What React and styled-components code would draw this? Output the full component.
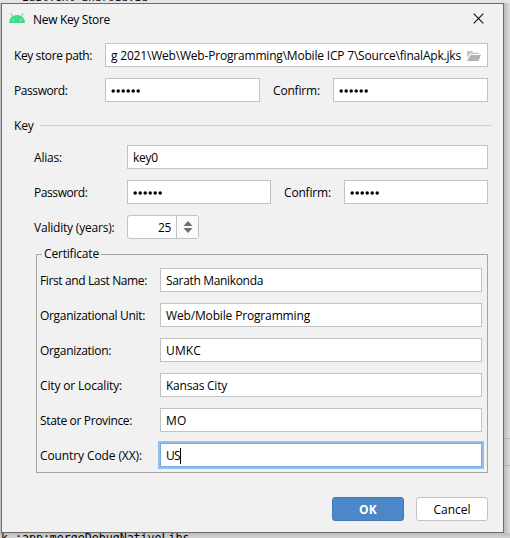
import React, { useLayoutEffect, useRef, useState } from "react";
import styled, { createGlobalStyle } from "styled-components";

const GlobalStyle = createGlobalStyle`
  * { box-sizing: border-box; }
  body { margin: 0; overflow: hidden; }
`;

const Desktop = styled.main`
  width: 510px;
  height: 538px;
  display: grid;
  grid-template-columns: 1px 503px 6px;
  grid-template-rows: 3px 530px 5px;
  overflow: hidden;
  background: #dcdcdc;
  font: 12px/16px "Open Sans", "Noto Sans", sans-serif;
  color: #000;
`;

const CodeStrip = styled.div`
  grid-column: 1 / -1;
  display: flex;
  align-items: ${(p) => (p.$bottom ? "flex-start" : "flex-end")};
  overflow: hidden;
  background: ${(p) => (p.$bottom ? "linear-gradient(#bdbdbd, #d2d2d2)" : "#e3e3e3")};
  padding-left: ${(p) => (p.$bottom ? 1 : 22)}px;
  font: ${(p) => (p.$bottom ? 11.6 : 11)}px/14px "DejaVu Sans Mono", monospace;
  white-space: pre;
`;

const CodeText = styled.span`
  margin: ${(p) => p.$margin};
`;

const LeftEdge = styled.div`
  background: #c3c3c3;
`;

const RightEdge = styled.div`
  display: grid;
  grid-template-rows: 435px 28px 1fr;
  background: linear-gradient(90deg, #b9b9b9, #dedede);
`;

const PaneBar = styled.div`
  grid-row: 2;
  border-top: 1px solid #b3b3b3;
  border-bottom: 1px solid #b3b3b3;
`;

const Dialog = styled.section`
  display: flex;
  flex-direction: column;
  background: #f1f1f1;
  border: 1px solid #6c6c6c;
`;

const TitleBar = styled.header`
  height: 39px;
  display: flex;
  align-items: flex-start;
  padding: 6px 17px 0 6px;
`;

const Title = styled.h1`
  margin: 0 auto 0 7px;
  padding-top: 2px;
  font: inherit;
`;

const Row = styled.div`
  height: 24px;
  flex: none;
  display: flex;
  align-items: center;
  padding: 0 ${(p) => (p.$inset ? 0 : 15)}px 0 ${(p) => p.$left}px;
  margin-bottom: 11px;
`;

const Label = styled.label`
  width: ${(p) => p.$w}px;
  flex: none;
  padding: 2px 0 0 ${(p) => p.$indent ?? 0}px;
  white-space: nowrap;
`;

const Field = styled.div`
  height: 24px;
  width: ${(p) => (p.$w ? `${p.$w}px` : "auto")};
  flex: ${(p) => (p.$w ? "none" : "1")};
  min-width: 0;
  display: flex;
  align-items: center;
  padding: 2px 5px 0;
  background: #fff;
  border: 1px solid ${(p) => (p.$focused ? "#76a9dc" : "#c2c2c2")};
  box-shadow: ${(p) => (p.$focused ? "0 0 0 2px #97c0e8" : "none")};
  white-space: nowrap;
`;

const Caret = styled.i`
  width: 1px;
  height: 16px;
  margin-bottom: 1px;
  background: #000;
`;

const DotsSvg = styled.svg`
  display: block;
  flex: none;
`;

const PathIcon = styled.svg`
  margin: 0 0 1px auto;
  flex: none;
`;

const SectionHeading = styled.h2`
  height: 24px;
  margin: 0 0 8px;
  padding: 1px 11px 0 12px;
  display: flex;
  align-items: center;
  font: inherit;
`;

const Rule = styled.span`
  flex: 1;
  height: 1px;
  margin: 0 0 1px 6px;
  background: #cfcfcf;
`;

const Spinner = styled.div`
  width: 72px;
  height: 24px;
  display: grid;
  grid-template-columns: 49px 1fr;
  background: #fff;
  border: 1px solid #c2c2c2;
  border-radius: 3px;
  overflow: hidden;
`;

const SpinnerValue = styled.span`
  padding: 4px 5px 0 0;
  text-align: right;
  border-right: 1px solid #c2c2c2;
`;

const SpinnerArrows = styled.span`
  display: grid;
  place-items: center;
  background: #fafafa;
`;

const Certificate = styled.fieldset`
  height: 227px;
  flex: none;
  margin: -4px 15px 24px 34px;
  padding: 6px 5px 0 3px;
  min-width: 0;
  border: 1px solid #a6a6a6;
`;

const Legend = styled.legend`
  height: 16px;
  margin-left: 2px;
  padding: 0 2px;
`;

const Footer = styled.footer`
  display: flex;
  justify-content: flex-end;
  gap: 12px;
  padding-right: 15px;
`;

const Button = styled.button`
  width: 72px;
  height: 24px;
  padding: 1px 0 0;
  border-radius: 3px;
  border: 1px solid ${(p) => (p.$primary ? "#4579b4" : "#c2c2c2")};
  background: ${(p) => (p.$primary ? "#4c87c8" : "#fff")};
  color: ${(p) => (p.$primary ? "#fff" : "#000")};
  font: inherit;
  font-weight: ${(p) => (p.$primary ? 700 : 400)};
`;

const CloseButton = styled.span`
  height: 11px;
  display: flex;
  margin: 3px 2px 0 0;
`;

const TextRun = styled.span`
  display: inline-block;
  white-space: pre;
`;

/* Tracks its letters so that the run takes up the given width. */
function Fit({ width, children }) {
  const ref = useRef(null);
  const [spacing, setSpacing] = useState(0);
  useLayoutEffect(() => {
    const natural = ref.current.getBoundingClientRect().width;
    setSpacing((width - natural) / children.length);
  }, []);
  return (
    <TextRun ref={ref} style={{ letterSpacing: spacing }}>
      {children}
    </TextRun>
  );
}

const AndroidIcon = () => (
  <svg width="18" height="14" viewBox="0 0 18 14">
    <path d="M1 13a8 8 0 0 1 16 0Z" fill="#45dc88" />
    <path d="M4.7 6.8 2.8 3.2M13.3 6.8l1.9-3.6" stroke="#45dc88" strokeWidth="1" />
    <circle cx="5.3" cy="10" r=".75" fill="#f1f1f1" />
    <circle cx="12.7" cy="10" r=".75" fill="#f1f1f1" />
  </svg>
);

const CloseIcon = () => (
  <svg width="11" height="11" viewBox="0 0 11 11">
    <path d="m.7.7 9.6 9.6M10.3.7.7 10.3" stroke="#111" strokeWidth="1.15" />
  </svg>
);

const FolderIcon = () => (
  <PathIcon width="16" height="14" viewBox="0 0 16 14">
    <path d="M1 9V2h5l1.5 1.8H13V5H4Z" fill="#c2c5c8" />
    <path d="M4.5 6H15l-2.6 6H1Z" fill="#aeb3b7" />
  </PathIcon>
);

const Dots = () => (
  <DotsSvg width="30" height="6" viewBox="0 0 30 6">
    {[0, 1, 2, 3, 4, 5].map((i) => (
      <circle key={i} cx={2.2 + i * 5} cy="3" r="1.75" />
    ))}
  </DotsSvg>
);

const certificateFields = [
  { label: "First and Last Name:", labelWidth: 107, value: "Sarath Manikonda", width: 97 },
  { label: "Organizational Unit:", labelWidth: 105, value: "Web/Mobile Programming", width: 144 },
  { label: "Organization:", labelWidth: 71, value: "UMKC", width: 35 },
  { label: "City or Locality:", labelWidth: 82, value: "Kansas City", width: 61 },
  { label: "State or Province:", labelWidth: 92, value: "MO", width: 20.5 },
  { label: "Country Code (XX):", labelWidth: 102, value: "US", width: 14, focused: true },
];

export default function App() {
  return (
    <>
      <GlobalStyle />
      <Desktop>
        <CodeStrip>
          <CodeText $margin="0 0 -2px">EditText android:id</CodeText>
        </CodeStrip>
        <LeftEdge />
        <Dialog>
          <TitleBar>
            <AndroidIcon />
            <Title><Fit width={77}>New Key Store</Fit></Title>
            <CloseButton><CloseIcon /></CloseButton>
          </TitleBar>
          <Row $left={12}>
            <Label $w={91}><Fit width={78}>Key store path:</Fit></Label>
            <Field>
              <Fit width={350}>g 2021\Web\Web-Programming\Mobile ICP 7\Source\finalApk.jks</Fit>
              <FolderIcon />
            </Field>
          </Row>
          <Row $left={12}>
            <Label $w={91}><Fit width={53.5}>Password:</Fit></Label>
            <Field $w={155}><Dots /></Field>
            <Label $w={73} $indent={13}><Fit width={47}>Confirm:</Fit></Label>
            <Field><Dots /></Field>
          </Row>
          <SectionHeading><Fit width={19.5}>Key</Fit><Rule /></SectionHeading>
          <Row $left={32}>
            <Label $w={93}><Fit width={28}>Alias:</Fit></Label>
            <Field><Fit width={25}>key0</Fit></Field>
          </Row>
          <Row $left={32}>
            <Label $w={93}><Fit width={53.5}>Password:</Fit></Label>
            <Field $w={144}><Dots /></Field>
            <Label $w={73} $indent={13}><Fit width={47}>Confirm:</Fit></Label>
            <Field><Dots /></Field>
          </Row>
          <Row $left={32}>
            <Label $w={93}><Fit width={80.5}>Validity (years):</Fit></Label>
            <Spinner>
              <SpinnerValue><Fit width={13}>25</Fit></SpinnerValue>
              <SpinnerArrows>
                <svg width="10" height="14" viewBox="0 0 10 14">
                  <path d="m5 1 4.5 5h-9ZM5 13l4.5-5h-9Z" fill="#6e6e6e" />
                </svg>
              </SpinnerArrows>
            </Spinner>
          </Row>
          <Certificate>
            <Legend><Fit width={55}>Certificate</Fit></Legend>
            {certificateFields.map(({ label, labelWidth, value, width, focused }) => (
              <Row key={label} $left={0} $inset>
                <Label $w={120}><Fit width={labelWidth}>{label}</Fit></Label>
                <Field $focused={focused}>
                  <Fit width={width}>{value}</Fit>
                  {focused && <Caret />}
                </Field>
              </Row>
            ))}
          </Certificate>
          <Footer>
            <Button $primary><Fit width={18}>OK</Fit></Button>
            <Button><Fit width={37}>Cancel</Fit></Button>
          </Footer>
        </Dialog>
        <RightEdge><PaneBar /></RightEdge>
        <CodeStrip $bottom>
          <CodeText $margin="-2px 0 0">k :app:mergeDebugNativeLibs</CodeText>
        </CodeStrip>
      </Desktop>
    </>
  );
}
